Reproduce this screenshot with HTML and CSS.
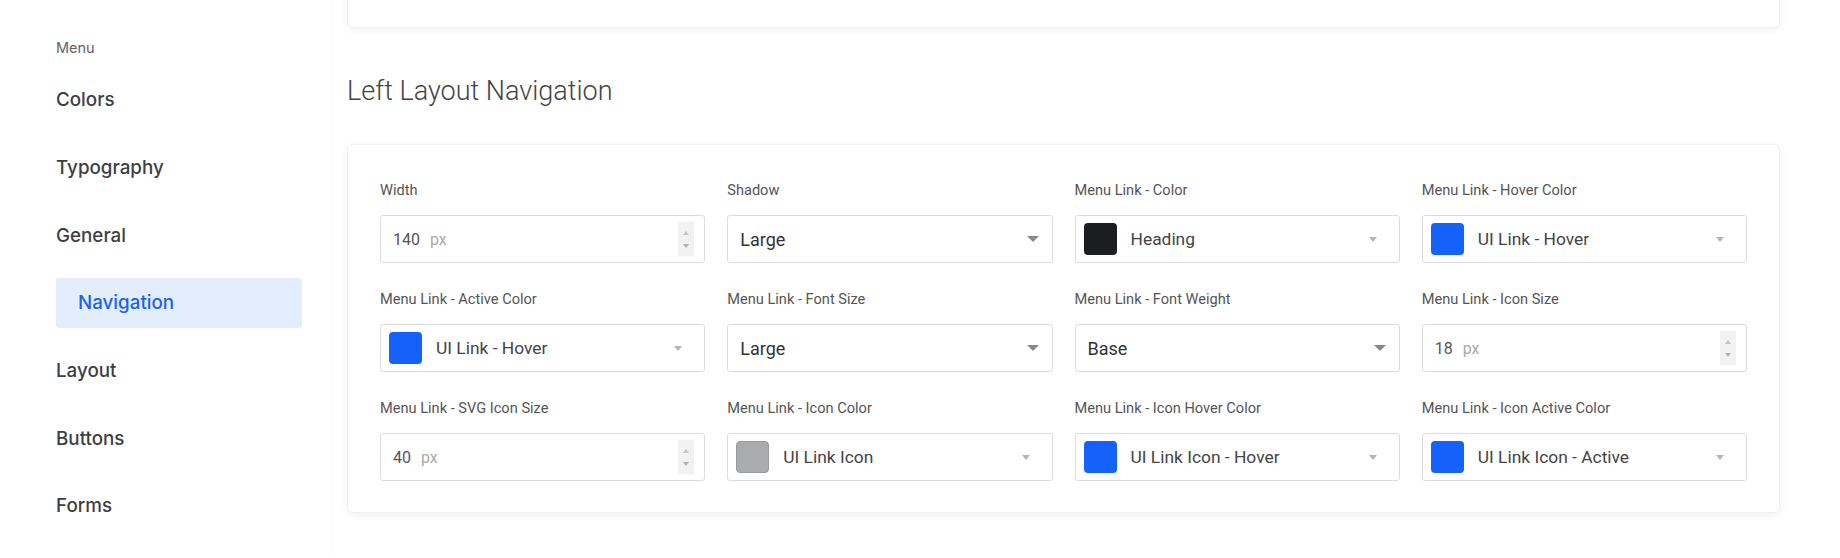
FILE: index.html
```html
<!DOCTYPE html>
<html>
<head>
<meta charset="utf-8">
<link rel="stylesheet" href="styles.css">
</head>
<body>
<div class="app">
  <aside class="sidebar">
    <div class="menu-label">Menu</div>
    <nav class="menu">
      <a class="menu-item">Colors</a>
      <a class="menu-item">Typography</a>
      <a class="menu-item">General</a>
      <a class="menu-item active">Navigation</a>
      <a class="menu-item">Layout</a>
      <a class="menu-item">Buttons</a>
      <a class="menu-item">Forms</a>
    </nav>
  </aside>
  <main class="main">
    <div class="card card-top"></div>
    <h2 class="section-title">Left Layout Navigation</h2>
    <div class="card card-form">
      <div class="grid">
        <div class="field">
          <label class="label">Width</label>
          <div class="input number">
            <span class="num">140</span><span class="unit">px</span>
            <span class="spinner"><span class="up"></span><span class="down"></span></span>
          </div>
        </div>
        <div class="field">
          <label class="label">Shadow</label>
          <div class="input select"><span class="val">Large</span><span class="arrow"></span></div>
        </div>
        <div class="field">
          <label class="label">Menu Link - Color</label>
          <div class="input color"><span class="swatch dark"></span><span class="cval">Heading</span><span class="carrow"></span></div>
        </div>
        <div class="field">
          <label class="label">Menu Link - Hover Color</label>
          <div class="input color"><span class="swatch blue"></span><span class="cval">UI Link - Hover</span><span class="carrow"></span></div>
        </div>

        <div class="field">
          <label class="label">Menu Link - Active Color</label>
          <div class="input color"><span class="swatch blue"></span><span class="cval">UI Link - Hover</span><span class="carrow"></span></div>
        </div>
        <div class="field">
          <label class="label">Menu Link - Font Size</label>
          <div class="input select"><span class="val">Large</span><span class="arrow"></span></div>
        </div>
        <div class="field">
          <label class="label">Menu Link - Font Weight</label>
          <div class="input select"><span class="val">Base</span><span class="arrow"></span></div>
        </div>
        <div class="field">
          <label class="label">Menu Link - Icon Size</label>
          <div class="input number">
            <span class="num">18</span><span class="unit">px</span>
            <span class="spinner"><span class="up"></span><span class="down"></span></span>
          </div>
        </div>

        <div class="field">
          <label class="label">Menu Link - SVG Icon Size</label>
          <div class="input number">
            <span class="num">40</span><span class="unit">px</span>
            <span class="spinner"><span class="up"></span><span class="down"></span></span>
          </div>
        </div>
        <div class="field">
          <label class="label">Menu Link - Icon Color</label>
          <div class="input color"><span class="swatch gray"></span><span class="cval">UI Link Icon</span><span class="carrow"></span></div>
        </div>
        <div class="field">
          <label class="label">Menu Link - Icon Hover Color</label>
          <div class="input color"><span class="swatch blue"></span><span class="cval">UI Link Icon - Hover</span><span class="carrow"></span></div>
        </div>
        <div class="field">
          <label class="label">Menu Link - Icon Active Color</label>
          <div class="input color"><span class="swatch blue"></span><span class="cval">UI Link Icon - Active</span><span class="carrow"></span></div>
        </div>
      </div>
    </div>
  </main>
</div>
</body>
</html>
```
FILE: styles.css
```css
* { box-sizing: border-box; }
html, body {
  margin: 0;
  padding: 0;
  background: #fff;
  height: 558px;
  overflow: hidden;
}
body {
  font-family: Roboto, "Liberation Sans", sans-serif;
  color: #333;
}
.app {
  display: flex;
  height: 558px;
}
.sidebar {
  width: 330px;
  flex: none;
  padding: 38px 28px 0 56px;
  box-shadow: 1px 0 6px rgba(0,0,0,0.02);
  position: relative;
  z-index: 1;
}
.menu-label {
  font-family: Inter, Roboto, sans-serif;
  font-size: 14.5px;
  line-height: 20px;
  color: #5f6368;
}
.menu {
  display: flex;
  flex-direction: column;
  gap: 17.7px;
  margin-top: 16.7px;
}
.menu-item {
  display: flex;
  align-items: center;
  height: 50px;
  font-family: Inter, Roboto, sans-serif;
  font-weight: 500;
  font-size: 18.8px;
  color: #3c4043;
  text-decoration: none;
  border-radius: 3px;
}
.menu-item.active {
  background: #e3eefc;
  color: #1a62f0;
  padding-left: 22px;
}
.main {
  flex: 1;
  padding: 0 60px 0 17px;
}
.card {
  background: #fff;
  border: 1px solid #f0f0f0;
  border-radius: 6px;
  box-shadow: 0 2px 8px rgba(0,0,0,0.06);
}
.card-top {
  height: 68px;
  margin-top: -40px;
}
.section-title {
  margin: 0;
  padding: 46px 0 0 0;
  height: 116px;
  font-weight: 300;
  font-size: 27px;
  line-height: 34px;
  color: #444;
}
.card-form {
  padding: 35px 32px 31px 32px;
}
.grid {
  display: grid;
  grid-template-columns: repeat(4, 1fr);
  column-gap: 22px;
  row-gap: 26px;
}
.field {
  display: flex;
  flex-direction: column;
}
.label {
  font-size: 14.6px;
  line-height: 20px;
  color: #555;
  margin-bottom: 15px;
}
.input {
  height: 48px;
  border: 1px solid #dcdcdc;
  border-radius: 3px;
  display: flex;
  align-items: center;
  background: #fff;
}
.number {
  padding: 0 10px 0 12px;
}
.num {
  font-size: 16px;
  color: #555;
}
.unit {
  font-size: 16px;
  color: #aaa;
  margin-left: 10px;
}
.spinner {
  margin-left: auto;
  width: 16px;
  height: 34px;
  background: #f2f2f2;
  display: flex;
  flex-direction: column;
  align-items: center;
  justify-content: center;
  gap: 9px;
}
.spinner .up {
  width: 0; height: 0;
  border-left: 3.5px solid transparent;
  border-right: 3.5px solid transparent;
  border-bottom: 4px solid #c4c4c4;
}
.spinner .down {
  width: 0; height: 0;
  border-left: 3.5px solid transparent;
  border-right: 3.5px solid transparent;
  border-top: 4px solid #b0b0b0;
}
.select {
  padding: 0 13px 0 12px;
}
.val {
  font-size: 18px;
  color: #333;
}
.arrow {
  margin-left: auto;
  width: 0; height: 0;
  border-left: 6px solid transparent;
  border-right: 6px solid transparent;
  border-top: 6px solid #888;
}
.color {
  padding: 0 22px 0 8px;
}
.swatch {
  width: 33px;
  height: 32px;
  border-radius: 4px;
  flex: none;
}
.swatch.dark { background: #1c1d20; }
.swatch.blue { background: #1562fb; }
.swatch.gray { background: #a9abae; border: 1px solid #9a9a9a; }
.cval {
  margin-left: 14px;
  font-size: 17.4px;
  color: #444;
}
.carrow {
  margin-left: auto;
  width: 0; height: 0;
  border-left: 4.5px solid transparent;
  border-right: 4.5px solid transparent;
  border-top: 5px solid #b5b5b5;
}
```
